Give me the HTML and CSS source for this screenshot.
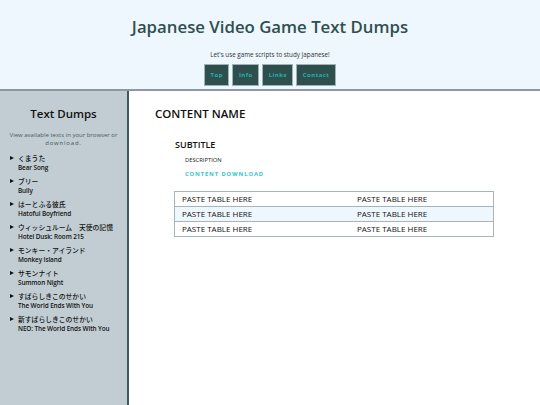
FILE: index.html
```html
<!DOCTYPE html>
<html>
<head>
<meta charset="utf-8">
<link rel="stylesheet" href="styles.css">
</head>
<body>
<header class="site-header">
  <h1 class="site-title">Japanese Video Game Text Dumps</h1>
  <p class="site-tagline">Let's use game scripts to study Japanese!</p>
  <nav class="site-nav">
    <a class="nav-btn" href="#">Top</a>
    <a class="nav-btn" href="#">Info</a>
    <a class="nav-btn" href="#">Links</a>
    <a class="nav-btn" href="#">Contact</a>
  </nav>
</header>
<div class="layout">
  <aside class="sidebar">
    <h2 class="side-title">Text Dumps</h2>
    <p class="side-desc">View available texts in your browser or<br><span class="dl">download.</span></p>
    <ul class="game-list">
      <li><span class="ja">くまうた</span><span class="en">Bear Song</span></li>
      <li><span class="ja">ブリー</span><span class="en">Bully</span></li>
      <li><span class="ja">はーとふる彼氏</span><span class="en">Hatoful Boyfriend</span></li>
      <li><span class="ja">ウィッシュルーム　天使の記憶</span><span class="en">Hotel Dusk: Room 215</span></li>
      <li><span class="ja">モンキー・アイランド</span><span class="en">Monkey Island</span></li>
      <li><span class="ja">サモンナイト</span><span class="en">Summon Night</span></li>
      <li><span class="ja">すばらしきこのせかい</span><span class="en">The World Ends With You</span></li>
      <li><span class="ja">新すばらしきこのせかい</span><span class="en">NEO: The World Ends With You</span></li>
    </ul>
  </aside>
  <main class="content">
    <h2 class="content-name">CONTENT NAME</h2>
    <section class="entry">
      <h3 class="subtitle">SUBTITLE</h3>
      <p class="desc">DESCRIPTION</p>
      <a class="download" href="#">CONTENT DOWNLOAD</a>
    </section>
    <table class="data-table">
      <tr><td class="c1">PASTE TABLE HERE</td><td>PASTE TABLE HERE</td></tr>
      <tr class="alt"><td class="c1">PASTE TABLE HERE</td><td>PASTE TABLE HERE</td></tr>
      <tr><td class="c1">PASTE TABLE HERE</td><td>PASTE TABLE HERE</td></tr>
    </table>
  </main>
</div>
</body>
</html>
```
FILE: styles.css
```css
html, body {
  margin: 0;
  padding: 0;
  height: 100%;
}
body {
  font-family: "Open Sans", "Noto Sans CJK JP", sans-serif;
  color: #111;
  background: #fff;
  display: flex;
  flex-direction: column;
}
.site-header {
  background: #eef7fd;
  border-bottom: 2px solid #8c9a9e;
  height: 89px;
  text-align: center;
}
.site-title {
  margin: 0;
  padding-top: 13px;
  font-size: 16.8px;
  line-height: 28px;
  font-weight: 600;
  color: #2f4f4f;
}
.site-tagline {
  margin: 9px 0 0;
  font-size: 6.3px;
  line-height: 10px;
  color: #333;
}
.site-nav {
  display: flex;
  justify-content: center;
  gap: 3px;
  margin-top: 4px;
}
.nav-btn {
  display: block;
  height: 20px;
  line-height: 20px;
  padding: 0 5.5px;
  background: #2f4f4f;
  border: 1px solid #9fb2b4;
  color: #20b2aa;
  font-size: 6px;
  font-weight: 700;
  letter-spacing: 0.45px;
  text-decoration: none;
}
.layout {
  flex: 1;
  display: flex;
}
.sidebar {
  width: 127px;
  flex: none;
  background: #c1cdd3;
  border-right: 2px solid #3f5a5c;
  padding-top: 15px;
}
.side-title {
  margin: 0;
  text-align: center;
  font-size: 11.5px;
  line-height: 16px;
  font-weight: 600;
  color: #111;
}
.side-desc {
  margin: 9px 2px 0;
  text-align: center;
  font-size: 6px;
  line-height: 8px;
  color: #4a5a5e;
}
.dl {
  letter-spacing: 0.8px;
  color: #3d5557;
}
.game-list {
  list-style: none;
  margin: 6px 0 0;
  padding: 0 0 0 18px;
}
.game-list li {
  position: relative;
  margin-bottom: 3px;
}
.game-list li::before {
  content: "";
  position: absolute;
  left: -8px;
  top: 3px;
  border-left: 4px solid #111;
  border-top: 2.5px solid transparent;
  border-bottom: 2.5px solid transparent;
}
.ja, .en {
  display: block;
  line-height: 10px;
  color: #111;
}
.ja {
  font-family: "Noto Sans CJK JP", sans-serif;
  font-size: 6.8px;
  font-weight: 500;
}
.en {
  font-size: 6.4px;
  font-weight: 600;
  letter-spacing: -0.1px;
}
.content {
  flex: 1;
  padding: 14px 0 0 26px;
}
.content-name {
  margin: 0;
  font-size: 11.5px;
  line-height: 18px;
  font-weight: 600;
  color: #111;
}
.entry {
  padding-left: 20px;
  margin-top: 15px;
}
.subtitle {
  margin: 0;
  font-size: 9px;
  line-height: 14px;
  font-weight: 600;
}
.desc {
  margin: 4px 0 0 10px;
  font-size: 5.8px;
  line-height: 8px;
  color: #222;
}
.download {
  display: block;
  margin: 6px 0 0 10px;
  font-size: 5.8px;
  line-height: 8px;
  font-weight: 700;
  letter-spacing: 0.9px;
  color: #35c3cc;
  text-decoration: none;
}
.data-table {
  margin: 13px 0 0 19px;
  width: 320px;
  border-collapse: collapse;
  border: 1px solid #a8b4b8;
}
.data-table tr {
  border-bottom: 1px solid #a8b4b8;
}
.data-table tr.alt {
  background: #eef7fd;
}
.data-table td {
  padding: 0 0 0 7px;
  height: 14px;
  font-size: 8px;
  line-height: 14px;
  color: #111;
}
.data-table td.c1 {
  width: 168px;
}
```
